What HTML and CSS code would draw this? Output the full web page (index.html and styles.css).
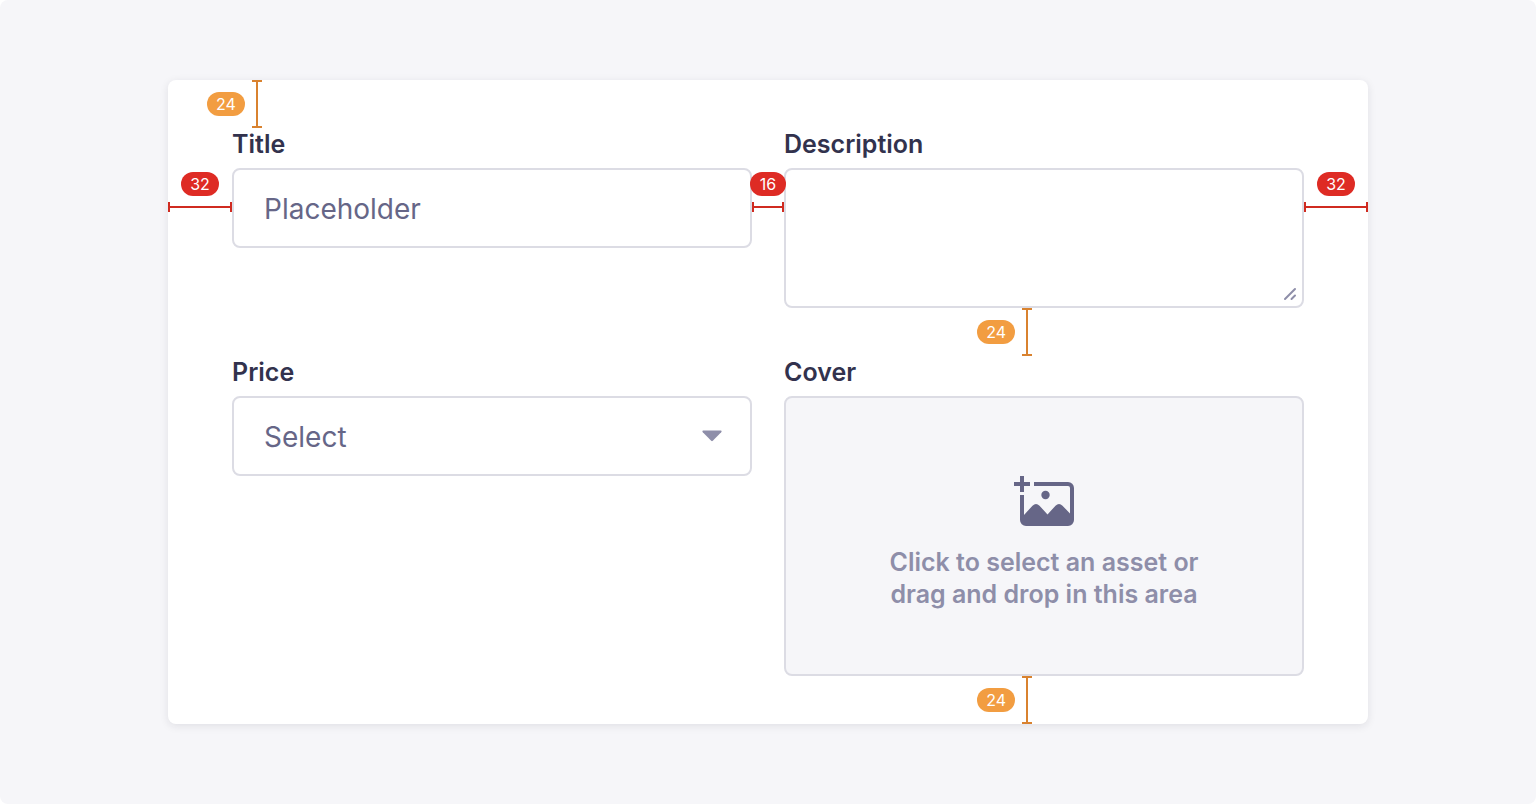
FILE: index.html
```html
<!DOCTYPE html>
<html lang="en">
<head>
<meta charset="utf-8">
<meta name="viewport" content="width=device-width, initial-scale=1">
<title>Form layout spacing</title>
<link rel="stylesheet" href="styles.css">
</head>
<body>
<main class="stage">
  <form class="card">
    <div class="field">
      <div class="measure measure-v measure-above"><span class="badge">24</span><span class="line"></span></div>
      <label class="label" for="title">Title</label>
      <div class="control">
        <input class="input" id="title" type="text" placeholder="Placeholder">
        <div class="measure measure-h measure-left"><span class="badge">32</span><span class="line"></span></div>
        <div class="measure measure-h measure-gutter"><span class="badge">16</span><span class="line"></span></div>
      </div>
    </div>
    <div class="field">
      <label class="label" for="description">Description</label>
      <div class="control">
        <textarea class="input textarea" id="description"></textarea>
        <svg class="grip" viewBox="0 0 14 14" aria-hidden="true"><path d="M2 12 12 2M8.500 12 12 8.500"/></svg>
        <div class="measure measure-h measure-right"><span class="badge">32</span><span class="line"></span></div>
        <div class="measure measure-v measure-below"><span class="badge">24</span><span class="line"></span></div>
      </div>
    </div>
    <div class="field">
      <label class="label" for="price">Price</label>
      <div class="control">
        <select class="input select" id="price"><option>Select</option></select>
        <svg class="caret" viewBox="0 0 20 12" aria-hidden="true"><path d="M1.200 0.500H18.800Q20.200 0.800 19.200 2.200L10.800 10.800Q10 11.600 9.200 10.800L0.800 2.200Q-0.200 0.800 1.200 0.500Z"/></svg>
      </div>
    </div>
    <div class="field">
      <label class="label" for="cover">Cover</label>
      <div class="control">
        <button class="dropzone" id="cover" type="button">
          <svg class="picture" viewBox="0 0 60 50" aria-hidden="true">
            <path d="M6 0h4v6h6v4h-6v6H6v-6H0V6h6z"/>
            <path fill-rule="evenodd" d="M20 6h34a6 6 0 0 1 6 6v32a6 6 0 0 1-6 6H12a6 6 0 0 1-6-6V19h4v20L18.500 29.700Q22 26.500 25.500 29.700L33.500 38.500 41.500 29.700Q45 26.500 48.500 29.700L56 37.500V12a2 2 0 0 0-2-2H20z"/>
            <circle cx="31.500" cy="19" r="4.200"/>
          </svg>
          <span class="hint">Click to select an asset or drag and drop in this area</span>
        </button>
        <div class="measure measure-v measure-below"><span class="badge">24</span><span class="line"></span></div>
      </div>
    </div>
  </form>
</main>
</body>
</html>
```
FILE: styles.css
```css
* { box-sizing: border-box; }

body {
  margin: 0;
  background: #fff;
  color: #32324d;
  font-family: Inter, "Liberation Sans", sans-serif;
  font-optical-sizing: none;
}

.stage {
  min-height: 100vh;
  padding: 80px 168px;
  border-radius: 8px;
  background: #f6f6f9;
}

.card {
  display: grid;
  grid-template-columns: repeat(2, minmax(0, 1fr));
  gap: 48px 32px;
  padding: 48px 64px;
  border-radius: 8px;
  background: #fff;
  box-shadow: 0 2px 8px rgba(33, 33, 52, 0.1);
}

.field {
  position: relative;
  display: flex;
  flex-direction: column;
  gap: 8px;
}

.label {
  font-size: 25px;
  font-weight: 600;
  line-height: 32px;
}

.control {
  position: relative;
  display: flex;
}

.input {
  width: 100%;
  height: 80px;
  margin: 0;
  padding: 1px 30px 0;
  border: 2px solid #dcdce4;
  border-radius: 8px;
  background: #fff;
  color: #666687;
  font: inherit;
  font-size: 28px;
  line-height: 40px;
}

.input::placeholder {
  color: #666687;
  opacity: 1;
}

.textarea {
  height: 140px;
  padding: 18px 30px;
  resize: none;
}

.select { appearance: none; }

.grip {
  position: absolute;
  right: 7px;
  bottom: 7px;
  width: 14px;
  height: 14px;
  fill: none;
  stroke: #8e8ea9;
  stroke-width: 2;
  stroke-linecap: round;
}

.caret {
  position: absolute;
  top: 34px;
  right: 30px;
  width: 20px;
  height: 12px;
  fill: #8e8ea9;
  pointer-events: none;
}

.dropzone {
  display: flex;
  flex-direction: column;
  align-items: center;
  justify-content: center;
  gap: 20px;
  width: 100%;
  height: 280px;
  padding: 14px 24px 0;
  border: 2px solid #dcdce4;
  border-radius: 8px;
  background: #f6f6f9;
  color: #8e8ea9;
  font: inherit;
}

.picture {
  width: 60px;
  height: 50px;
  fill: #666687;
}

.hint {
  max-width: 320px;
  font-size: 25px;
  font-weight: 600;
  line-height: 32px;
}

.measure {
  position: absolute;
  z-index: 1;
  display: flex;
  align-items: center;
  pointer-events: none;
}

.measure-h {
  --badge: #de2b24;
  --line: #d02b20;
  top: 4px;
  flex-direction: column;
  gap: 6px;
  width: 64px;
}

.measure-v {
  --badge: #f29d41;
  --line: #d9822f;
  gap: 7px;
  height: 48px;
}

.measure-left { right: 100%; }
.measure-right { left: 100%; }
.measure-gutter { left: 100%; width: 32px; }
.measure-above { bottom: 100%; left: -25px; }
.measure-below { top: 100%; right: calc(50% + 12px); }

.badge {
  min-width: 36px;
  padding: 0 9px;
  border-radius: 12px;
  background: var(--badge);
  color: #fff;
  font-size: 16px;
  line-height: 24px;
  text-align: center;
}

.measure-h .line {
  width: 100%;
  height: 10px;
  border: solid var(--line);
  border-width: 0 2px;
  background: linear-gradient(var(--line), var(--line)) center / 100% 2px no-repeat;
}

.measure-v .line {
  width: 10px;
  height: 100%;
  border: solid var(--line);
  border-width: 2px 0;
  background: linear-gradient(var(--line), var(--line)) center / 2px 100% no-repeat;
}
```
